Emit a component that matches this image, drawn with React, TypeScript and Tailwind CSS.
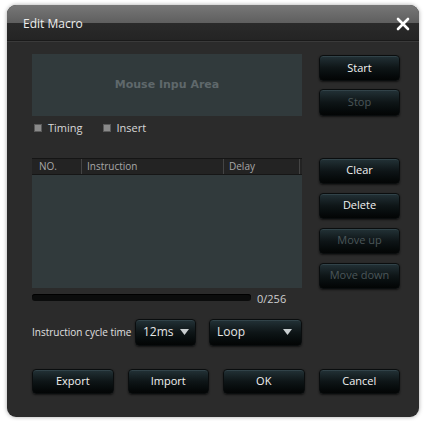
import React from "react";

const font = { fontFamily: '"Open Sans", "Noto Sans", sans-serif' };

function Btn({ label, disabled, className = "" }: { label: string; disabled?: boolean; className?: string }) {
  return (
    <div
      className={`flex items-center justify-center rounded-[4px] border border-[#0a0d0e] bg-gradient-to-b from-[#233237] via-[#0e1517] to-[#030505] text-[11px] shadow-[0_1px_2px_rgba(0,0,0,0.6),inset_0_1px_0_rgba(120,150,160,0.18)] ${
        disabled ? "text-[#4b5659]" : "text-[#f2f2f2]"
      } ${className}`}
    >
      {label}
    </div>
  );
}

function Dropdown({ label, className = "" }: { label: string; className?: string }) {
  return (
    <div
      className={`flex items-center justify-between rounded-[4px] border border-[#0a0d0e] bg-gradient-to-b from-[#233237] via-[#0e1517] to-[#030505] pl-[7px] pr-[9px] text-[12px] text-[#e6e6e6] shadow-[0_1px_2px_rgba(0,0,0,0.6),inset_0_1px_0_rgba(120,150,160,0.18)] ${className}`}
    >
      <span>{label}</span>
      <svg width="9" height="6" viewBox="0 0 9 6" className="ml-[6px] shrink-0">
        <path d="M0 0 H9 L4.5 6 Z" fill="#c9ced0" />
      </svg>
    </div>
  );
}

function Check({ label }: { label: string }) {
  return (
    <div className="flex items-center gap-[6px] text-[11px] text-[#d8d8d8]">
      <span className="h-[8px] w-[8px] border border-[#5a5a5a] bg-[#8a8a8a]" />
      <span>{label}</span>
    </div>
  );
}

export default function App() {
  return (
    <div className="h-[421px] w-[424px] bg-white pl-[7px] pt-[5px]" style={font}>
      <div className="flex h-[412px] w-[412px] flex-col overflow-hidden rounded-[9px] bg-[#2b2b2b] shadow-[0_0_4px_rgba(0,0,0,0.35)]">
        {/* title bar */}
        <div className="flex h-[36px] shrink-0 items-center justify-between border-b border-[#1a1a1a] bg-[linear-gradient(to_bottom,#777_0%,#5e5e5e_52%,#2a2a2a_52%,#242424_100%)] pl-[16px] pr-[9px] pt-[3px]">
          <span className="text-[12px] text-[#ededed]">Edit Macro</span>
          <svg width="14" height="14" viewBox="0 0 14 14">
            <path d="M2 2 L12 12 M12 2 L2 12" stroke="#ffffff" strokeWidth="2.6" strokeLinecap="round" />
          </svg>
        </div>
        <div className="h-px bg-[#3a3a3a]" />

        <div className="flex flex-col pl-[25px] pr-[19px] pt-[12px]">
          {/* top section */}
          <div className="flex gap-[17px]">
            <div className="flex w-[270px] flex-col">
              <div
                className="flex h-[62px] items-center justify-center bg-[#313a3c] text-[11px] font-bold text-[#5f686b]"
                style={{ fontFamily: '"DejaVu Sans", Verdana, sans-serif' }}
              >
                Mouse Inpu Area
              </div>
              <div className="mt-[4px] flex gap-[20px] pl-[2px]">
                <Check label="Timing" />
                <Check label="Insert" />
              </div>
            </div>
            <div className="flex w-[81px] flex-col gap-[8px] pt-px">
              <Btn label="Start" className="h-[26px]" />
              <Btn label="Stop" disabled className="h-[27px]" />
            </div>
          </div>

          {/* table section */}
          <div className="mt-[21px] flex gap-[17px]">
            <div className="flex w-[270px] flex-col">
              <div className="flex h-[130px] flex-col border-t border-[#151515] bg-[#313a3c]">
                <div className="flex h-[16px] items-center border-b border-[#161616] bg-[#232323] text-[10px] text-[#a8a8a8]">
                  <div className="flex h-full w-[50px] items-center border-r border-[#444] pl-[7px]">NO.</div>
                  <div className="flex h-full w-[142px] items-center border-r border-[#444] pl-[5px]">Instruction</div>
                  <div className="flex h-full w-[76px] items-center border-r border-[#444] pl-[5px]">Delay</div>
                </div>
              </div>
              <div className="mt-[6px] flex h-[8px] items-center">
                <div className="h-[7px] w-[219px] rounded-[3px] bg-[#0b0c0c] shadow-[inset_0_1px_0_#000]" />
                <span className="ml-[6px] mt-[2px] text-[11px] leading-none text-[#cfcfcf]">0/256</span>
              </div>
            </div>
            <div className="flex w-[81px] flex-col gap-[9px]">
              <Btn label="Clear" className="h-[26px]" />
              <Btn label="Delete" className="h-[26px]" />
              <Btn label="Move up" disabled className="h-[26px]" />
              <Btn label="Move down" disabled className="h-[26px]" />
            </div>
          </div>

          {/* cycle row */}
          <div className="mt-[17px] flex h-[27px] items-center">
            <span className="w-[103px] text-[10px] text-[#e0e0e0]">Instruction cycle time</span>
            <Dropdown label="12ms" className="h-[27px] w-[61px]" />
            <Dropdown label="Loop" className="ml-[13px] h-[27px] w-[93px]" />
          </div>

          {/* bottom buttons */}
          <div className="mt-[23px] flex gap-[14px]">
            <Btn label="Export" className="h-[25px] w-[82px]" />
            <Btn label="Import" className="h-[25px] w-[82px]" />
            <Btn label="OK" className="h-[25px] w-[82px]" />
            <Btn label="Cancel" className="h-[25px] w-[82px]" />
          </div>
        </div>
      </div>
    </div>
  );
}
